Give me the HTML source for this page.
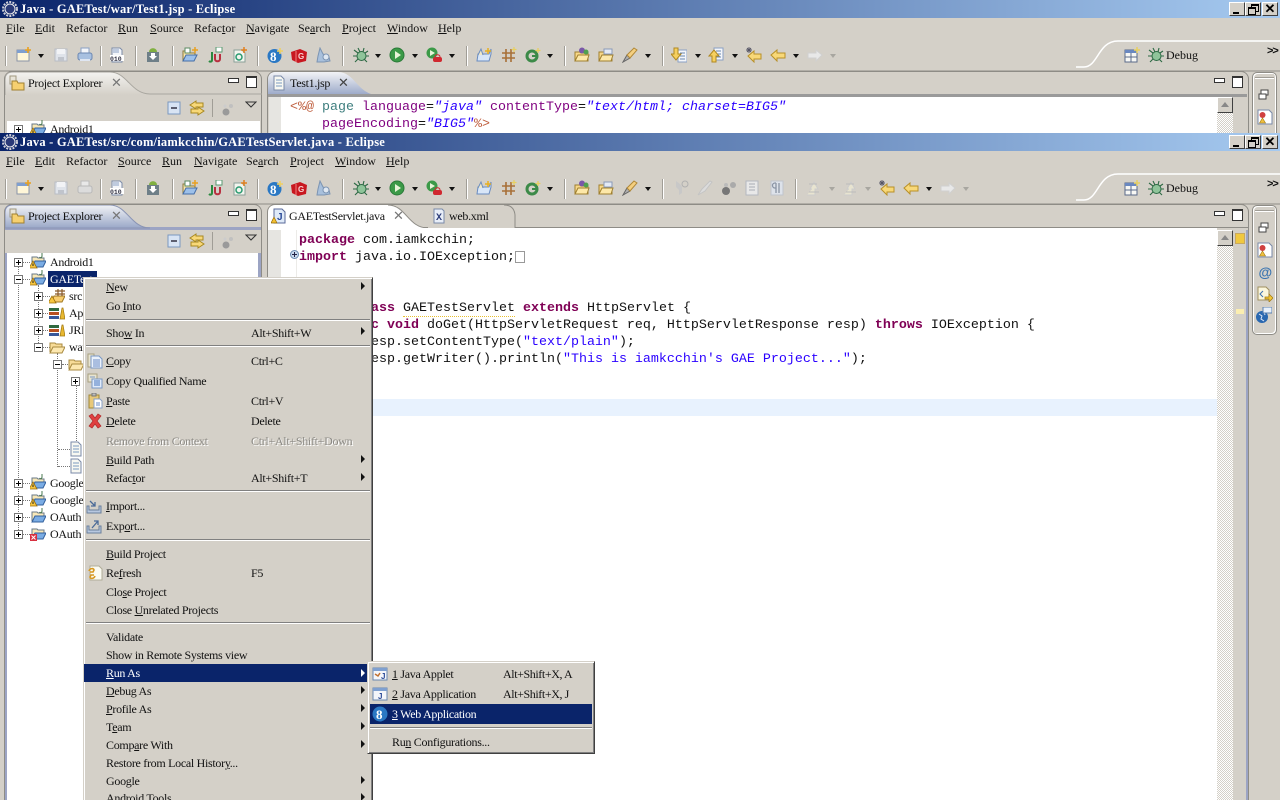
<!DOCTYPE html>
<html><head><meta charset="utf-8"><title>Eclipse</title>
<style>
html,body{margin:0;padding:0;width:1280px;height:800px;overflow:hidden;background:#d4d0c8}
#r{position:relative;width:1280px;height:800px;overflow:hidden;background:#d4d0c8}
.w{position:absolute;left:0;width:1280px;background:#d4d0c8;overflow:hidden}
.t{position:absolute;white-space:nowrap;font:12px/14px "Liberation Serif","Noto Serif CJK SC",serif;color:#111;letter-spacing:-.3px}
.mb{letter-spacing:0}
.b{position:absolute;left:0;width:1280px;height:18px;background:linear-gradient(90deg,#0a246a,#a6caf0)}
.tt{position:absolute;left:20px;top:1px;font:bold 12.5px/16px "Liberation Serif",serif;color:#fff;white-space:nowrap;letter-spacing:.2px}
.wb{position:absolute;top:2px;width:16px;height:14px;background:#d4d0c8;box-sizing:border-box;border:1px solid;border-color:#fff #404040 #404040 #fff}
svg.i{position:absolute;width:16px;height:16px;overflow:visible}
svg.e{position:absolute;width:9px;height:9px}
.sp{position:absolute;top:46px;width:1px;height:20px;background:#a09d96;border-right:1px solid #fff}
.dd{position:absolute;width:0;height:0;border:3px solid transparent;border-top:4px solid #111;border-bottom:0;top:54px}
.dg{border-top-color:#a8a6a0}
.c{position:absolute;white-space:pre;font:13.33px/17px "Liberation Mono",monospace;color:#111}
.k{color:#7f0055;font-weight:bold}.s{color:#2a00ff}
.l{position:absolute;border-left:1px dotted #777}
.h{position:absolute;border-top:1px dotted #777;height:0}
.m{position:absolute;background:#d4d0c8;box-sizing:border-box;border:1px solid;border-color:#d4d0c8 #404040 #404040 #d4d0c8;box-shadow:inset 1px 1px 0 #fff,inset -1px -1px 0 #808080}
.sep{position:absolute;height:1px;background:#808080;border-bottom:1px solid #fff}
.a{position:absolute;width:0;height:0;border:4px solid transparent;border-left:4px solid #111;border-right:0}
.hl{position:absolute;background:#0a246a}
.w2{color:#fff}.g{color:#8c8a85;text-shadow:1px 1px 0 #fff}
u{text-underline-offset:1px}
.hatch{position:absolute;background:repeating-conic-gradient(#d4d0c8 0 25%,#fff 0 50%) 0 0/2px 2px}
.x{position:absolute;top:76px;color:#777;font:13px/14px "Liberation Sans",sans-serif}
.ch{position:absolute;left:1267px;top:44px;font:bold 11px/14px "Liberation Sans",sans-serif;letter-spacing:-1px;color:#111}
</style></head><body><div id="r">
<svg width="0" height="0" style="position:absolute"><defs>
<symbol id="logo" viewBox="0 0 16 16"><circle cx="8" cy="8" r="7" fill="none" stroke="#cfcfd8" stroke-width="2" stroke-dasharray="2 1.2"/><circle cx="8" cy="8" r="5" fill="#2a3a78" stroke="#eee"/></symbol>
<symbol id="new" viewBox="0 0 16 16"><rect x="1" y="3" width="12" height="11" fill="#fff6d8" stroke="#8a94a8"/><rect x="1" y="3" width="12" height="3" fill="#7f9fd0"/><path d="M12 0v6M9 3h6" stroke="#e8a020" stroke-width="1.6"/></symbol>
<symbol id="save" viewBox="0 0 16 16"><path d="M2 2h12v12H2z" fill="#dfe3ea" stroke="#b8bcc4"/><rect x="4" y="2" width="8" height="5" fill="#f2f3f6"/><rect x="5" y="10" width="6" height="4" fill="#c0c4cc"/></symbol>
<symbol id="print" viewBox="0 0 16 16"><rect x="4" y="1" width="8" height="6" fill="#f4f6fa" stroke="#8aa0c4"/><rect x="1" y="6" width="14" height="7" rx="2" fill="#a8c0e0" stroke="#6b87b2"/><rect x="3" y="12" width="10" height="2" fill="#dfe6f2"/></symbol>
<symbol id="printg" viewBox="0 0 16 16"><rect x="4" y="1" width="8" height="6" fill="#e8e8e8" stroke="#bbb"/><rect x="1" y="6" width="14" height="7" rx="2" fill="#dcdcdc" stroke="#b8b8b8"/></symbol>
<symbol id="bin" viewBox="0 0 16 16"><path d="M3 1h8l2 2v12H3z" fill="#f4f6fa" stroke="#7c8ca8"/><rect x="1" y="8" width="14" height="6" fill="#fff"/><path d="M4 3h6M4 5h6" stroke="#8aa0c4"/><text x="1" y="14" font-family="Liberation Mono" font-size="6.5" font-weight="bold" fill="#334">010</text></symbol>
<symbol id="dl" viewBox="0 0 16 16"><rect x="2" y="5" width="12" height="10" fill="#6e7f88"/><path d="M4 5c0-5 8-5 8 0z" fill="#80b040"/><path d="M6 6h4v3h2l-4 4-4-4h2z" fill="#fff"/></symbol>
<symbol id="pkg" viewBox="0 0 16 16"><path d="M1 14V4h5l1 2h6v2" fill="#fde6a8" stroke="#8a7a40"/><path d="M1 14l3-6h11l-3 6z" fill="#9cc0ea" stroke="#446ea8"/><rect x="3" y="1" width="5" height="5" fill="#fff" stroke="#5a8a60"/><path d="M13 0v6M10 3h6" stroke="#e8a020" stroke-width="1.5"/></symbol>
<symbol id="ju" viewBox="0 0 16 16"><path d="M5 5v8c0 2-2 2-3 1" fill="none" stroke="#2a8a40" stroke-width="2"/><path d="M8 7v5c0 3 5 3 5 0V7" fill="none" stroke="#b83040" stroke-width="2"/><rect x="9" y="0" width="6" height="5" fill="#fff" stroke="#5a9a70"/></symbol>
<symbol id="cls" viewBox="0 0 16 16"><path d="M2 3h8l3 3v9H2z" fill="#f2f5ee" stroke="#8aa098"/><circle cx="7" cy="10" r="3" fill="none" stroke="#2a9a70" stroke-width="1.5"/><path d="M12 0v6M9 3h6" stroke="#e08020" stroke-width="1.5"/></symbol>
<symbol id="gg" viewBox="0 0 16 16"><circle cx="7.5" cy="9" r="7" fill="#2a78c4"/><text x="3" y="14" font-family="Liberation Serif" font-size="13" font-weight="bold" fill="#fff">8</text><path d="M13 1v6M10 4h6" stroke="#f0d060" stroke-width="1.5"/></symbol>
<symbol id="gg2" viewBox="0 0 16 16"><circle cx="8" cy="8" r="7.5" fill="#2a78c4"/><text x="4" y="13" font-family="Liberation Serif" font-size="13" font-weight="bold" fill="#fff">8</text></symbol>
<symbol id="red" viewBox="0 0 16 16"><path d="M0 5l9-3 7 3-1 9-8 2-6-3z" fill="#c81820"/><path d="M5 4v11" stroke="#f08080"/><text x="7" y="12" font-family="Liberation Sans" font-size="8" font-weight="bold" fill="#f8d0d0">G</text></symbol>
<symbol id="bird" viewBox="0 0 16 16"><path d="M5 1l3 6 6 3 1 4-6 1H2l1-6z" fill="#a8c0dc" stroke="#7c94b2"/><circle cx="11" cy="10" r="3" fill="#dfe8f2" stroke="#7c94b2"/></symbol>
<symbol id="bug" viewBox="0 0 16 16"><ellipse cx="8.5" cy="9" rx="4.5" ry="4.5" fill="#8fc49a" stroke="#2c6a44"/><path d="M1 3l4 3M15 4l-3 2M0 9h4M13 9h3M2 15l3-3M14 15l-3-3M5 1l2 4M11 1l-1 4" stroke="#2c6a44" stroke-width="1.1"/></symbol>
<symbol id="run" viewBox="0 0 16 16"><circle cx="8" cy="8" r="7" fill="#3c9a48" stroke="#2a7a38"/><path d="M6 4l6 4-6 4z" fill="#e8f4d8"/></symbol>
<symbol id="cov" viewBox="0 0 16 16"><circle cx="6" cy="6" r="5.5" fill="#3c9a48"/><path d="M4 3l5 3-5 3z" fill="#e8f4d8"/><rect x="7" y="10" width="9" height="5" rx="2" fill="#d02830"/><path d="M9 10c0-3 5-3 5 0" fill="none" stroke="#d02830"/></symbol>
<symbol id="tsk" viewBox="0 0 16 16"><path d="M1 14l1-7h11l2-5v5l-2 7z" fill="#d8e6f8" stroke="#6a8cc0"/><path d="M2 8l3-6 2 6" fill="#f0e8c8" stroke="#6a8cc0"/><path d="M12 1v6M9 4h6" stroke="#e8b020" stroke-width="1.5"/></symbol>
<symbol id="grid" viewBox="0 0 16 16"><path d="M5 2v13M10 2v13M1 6h13M1 11h13" stroke="#a87038" stroke-width="1.6"/><path d="M13 0v5M10.5 2.5h5" stroke="#e8d060" stroke-width="1.2"/></symbol>
<symbol id="gc" viewBox="0 0 16 16"><circle cx="7" cy="9" r="5" fill="none" stroke="#3c8a48" stroke-width="3"/><rect x="7" y="8" width="5" height="2" fill="#3c8a48"/><path d="M13 1v5M10.5 3.5h5" stroke="#e8d060" stroke-width="1.3"/></symbol>
<symbol id="f1" viewBox="0 0 16 16"><path d="M1 14V5h5l1 1h7v8z" fill="#f8d888" stroke="#a08030"/><path d="M1 14l3-6h11l-2 6z" fill="#fde8a8" stroke="#a08030"/><circle cx="8" cy="3.5" r="3" fill="#7a58a8"/><circle cx="12" cy="5" r="2.5" fill="#50a050"/></symbol>
<symbol id="f2" viewBox="0 0 16 16"><path d="M1 14V5h5l1 1h7v8z" fill="#f8d888" stroke="#a08030"/><path d="M1 14l3-6h11l-2 6z" fill="#fde8a8" stroke="#a08030"/><rect x="6" y="2" width="8" height="5" fill="#e4eaf4" stroke="#8a9ab8"/></symbol>
<symbol id="pen" viewBox="0 0 16 16"><path d="M1 15l4-7 3 3z" fill="#b0b0b0" stroke="#666"/><path d="M5 8l7-7 3 2-7 8z" fill="#f4cf80" stroke="#b08838"/></symbol>
<symbol id="dn" viewBox="0 0 16 16"><rect x="7" y="3" width="9" height="12" fill="#f4f6fa" stroke="#8aa0c4"/><path d="M9 6h5M9 9h5M9 12h5" stroke="#6a88b0"/><path d="M3 1h4v6h3l-5 6-5-6h3z" fill="#f6d060" stroke="#b08820"/></symbol>
<symbol id="up" viewBox="0 0 16 16"><rect x="6" y="1" width="9" height="12" fill="#f4f6fa" stroke="#8aa0c4"/><path d="M8 4h5M8 7h5M8 10h5" stroke="#6a88b0"/><path d="M4 15h4V9h3L6 3 1 9h3z" fill="#f6d060" stroke="#b08820"/></symbol>
<symbol id="bk" viewBox="0 0 16 16"><path d="M1 8l6-5v3h8v5H7v3z" fill="#f8d878" stroke="#b89028"/></symbol>
<symbol id="bks" viewBox="0 0 16 16"><path d="M2 9l6-5v3h7v5H8v3z" fill="#f8d878" stroke="#b89028"/><path d="M3 0v6M0 3h6M1 1l4 4M5 1L1 5" stroke="#556" stroke-width=".9"/></symbol>
<symbol id="fw" viewBox="0 0 16 16"><path d="M15 8l-6-5v3H1v5h8v3z" fill="#e8e8e8" stroke="#d0d0d0"/></symbol>
<symbol id="g1" viewBox="0 0 16 16"><path d="M7 4l-4-3 0 6 3 3v5l3-2V7z" fill="#c8c8c8"/><circle cx="12" cy="4" r="3" fill="none" stroke="#b0b0b0"/></symbol>
<symbol id="g2" viewBox="0 0 16 16"><path d="M1 15l4-6 8-8 2 1-7 9z" fill="#dcdcdc" stroke="#c4c4c4"/></symbol>
<symbol id="g3" viewBox="0 0 16 16"><circle cx="5" cy="11" r="4" fill="#777"/><circle cx="12" cy="5" r="3" fill="#aaa"/><circle cx="5" cy="5" r="2" fill="#bbb"/></symbol>
<symbol id="g4" viewBox="0 0 16 16"><rect x="2" y="1" width="12" height="14" fill="#e8e8e8" stroke="#b4b8c0"/><path d="M5 4h6M5 7h6M5 10h6" stroke="#a8acb4"/></symbol>
<symbol id="g5" viewBox="0 0 16 16"><rect x="2" y="1" width="12" height="14" fill="#dde2ea" stroke="#c0c4cc"/><path d="M7 3v10M10 3v10M7 3H6a2.500 2.500 0 0 0 0 5h1" fill="none" stroke="#8a94a4" stroke-width="1.3"/></symbol>
<symbol id="g6" viewBox="0 0 16 16"><path d="M2 15h8V9h3L9 2 5 9h2" fill="#e8e4d0" stroke="#ccc"/><path d="M4 4h8M4 12h10" stroke="#bbb"/></symbol>
<symbol id="persp" viewBox="0 0 16 16"><rect x="1" y="3" width="12" height="12" fill="#f8f8f4" stroke="#5a6a8a"/><rect x="1" y="3" width="12" height="3" fill="#6a88c0"/><path d="M7 6v9M1 10h12" stroke="#5a6a8a"/><path d="M13 0v6M10 3h6" stroke="#e8d060" stroke-width="1.5"/></symbol>
<symbol id="pe" viewBox="0 0 16 16"><path d="M1 1h6v8H1z" fill="#e8e4d8" stroke="#a09880"/><path d="M3 6h5l1 2h6v7H3z" fill="#f6d070" stroke="#a08030"/></symbol>
<symbol id="doc" viewBox="0 0 16 16"><path d="M3 1h7l3 3v11H3z" fill="#f8f8f2" stroke="#7a8aa8"/><path d="M5 5h6M5 8h6M5 11h6" stroke="#7a9ac0"/></symbol>
<symbol id="jf" viewBox="0 0 16 16"><path d="M3 1h8l3 3v11H3z" fill="#dfeaf8" stroke="#5a6a9a"/><text x="6" y="12" font-family="Liberation Sans" font-size="10" font-weight="bold" fill="#2a4a98">J</text><path d="M0 15l3-6 3 6z" fill="#f4c030" stroke="#906808" stroke-width=".7"/></symbol>
<symbol id="xf" viewBox="0 0 16 16"><path d="M3 1h8l2 2v12H3z" fill="#e8eef8" stroke="#7a8aa8"/><text x="5" y="12" font-family="Liberation Mono" font-size="10" font-weight="bold" fill="#2a3a78">X</text></symbol>
<symbol id="prj" viewBox="0 0 16 16"><path d="M2 13V4h5l1 1h6v3" fill="#f8e8b8" stroke="#6a7a88"/><path d="M2 14l3-6h11l-3 6z" fill="#7aace4" stroke="#33609c"/><path d="M12 0v3c0 2-2 2-2.500 1" fill="none" stroke="#4a7a50"/><path d="M-1 15l4-7 4 7z" fill="#f6c640" stroke="#9a6c08" stroke-width=".8"/><path d="M3 10.500v2.500" stroke="#222"/></symbol>
<symbol id="prjn" viewBox="0 0 16 16"><path d="M2 13V4h5l1 1h6v3" fill="#f8e8b8" stroke="#6a7a88"/><path d="M2 14l3-6h11l-3 6z" fill="#7aace4" stroke="#33609c"/><path d="M12 0v3c0 2-2 2-2.500 1" fill="none" stroke="#4a7a50"/></symbol>
<symbol id="prje" viewBox="0 0 16 16"><path d="M2 13V4h5l1 1h6v3" fill="#f8e8b8" stroke="#6a7a88"/><path d="M2 14l3-6h11l-3 6z" fill="#7aace4" stroke="#33609c"/><rect x="0" y="9" width="7" height="7" fill="#d83040"/><path d="M1.500 10.500l4 4M5.500 10.500l-4 4" stroke="#fff"/></symbol>
<symbol id="src" viewBox="0 0 16 16"><path d="M2 14l3-6h11l-3 6z" fill="#f8cd70" stroke="#a07820"/><path d="M9 1v7M13 1v7M6 3h10M6 6h10" stroke="#8a5a28" stroke-width="1.2"/><path d="M-1 15l4-7 4 7z" fill="#f6c640" stroke="#9a6c08" stroke-width=".8"/></symbol>
<symbol id="lib" viewBox="0 0 16 16"><rect x="0" y="3" width="10" height="3" fill="#306a40"/><rect x="0" y="7" width="10" height="3" fill="#b85020"/><rect x="0" y="11" width="10" height="3" fill="#38589a"/><path d="M11 14l2-11h1l2 11z" fill="#e8b830" stroke="#a07810" stroke-width=".7"/></symbol>
<symbol id="fold" viewBox="0 0 16 16"><path d="M1 13V4h5l1 1h6v3" fill="#f8dc98" stroke="#a88a40"/><path d="M1 14l3-6h12l-3 6z" fill="#fde8b0" stroke="#a88a40"/></symbol>
<symbol id="plus" viewBox="0 0 9 9"><rect x=".5" y=".5" width="8" height="8" fill="#fff" stroke="#777"/><path d="M2 4.500h5M4.500 2v5" stroke="#000"/></symbol>
<symbol id="minus" viewBox="0 0 9 9"><rect x=".5" y=".5" width="8" height="8" fill="#fff" stroke="#777"/><path d="M2 4.500h5" stroke="#000"/></symbol>
<symbol id="coll" viewBox="0 0 16 16"><rect x="2" y="2" width="12" height="12" fill="#d8e4f4" stroke="#7a98c0"/><path d="M5 8h6" stroke="#334" stroke-width="1.5"/></symbol>
<symbol id="link" viewBox="0 0 16 16"><path d="M1 5l6-4v2h7v4H7v2z" fill="#f8d878" stroke="#a88820"/><path d="M15 11l-6-4v2H2v4h7v2z" fill="#f8d878" stroke="#a88820"/></symbol>
<symbol id="flt" viewBox="0 0 16 16"><circle cx="6" cy="11" r="3.500" fill="#9a9a9a"/><circle cx="11" cy="5" r="2" fill="#c0c0c0"/><circle cx="5" cy="5" r="1.500" fill="#ccc"/></symbol>
<symbol id="rest" viewBox="0 0 16 16"><rect x="5" y="3" width="7" height="5" fill="#fff" stroke="#444"/><rect x="3" y="7" width="7" height="5" fill="#fff" stroke="#444"/></symbol>
<symbol id="dbg" viewBox="0 0 16 16"><path d="M1 1h11l3 3v11H1z" fill="#fff" stroke="#7a8aa8"/><circle cx="5.500" cy="6" r="3" fill="#d04040"/><path d="M5.500 9l3 5h-6z" fill="#f0c040" stroke="#a07810" stroke-width=".6"/></symbol>
<symbol id="at" viewBox="0 0 16 16"><text x="1.500" y="13" font-family="Liberation Sans" font-size="14" font-weight="bold" fill="#3a74b0">@</text></symbol>
<symbol id="dc2" viewBox="0 0 16 16"><path d="M1 1h8l3 3v10H1z" fill="#fbf6dc" stroke="#a09060"/><path d="M6 5L3 8l3 3" fill="none" stroke="#3a70b0"/><path d="M8 11h4V8l4 4-4 4v-3H8z" fill="#f4c838" stroke="#a07810" stroke-width=".7"/></symbol>
<symbol id="gb" viewBox="0 0 16 16"><circle cx="6" cy="10" r="6" fill="#2a68b0"/><path d="M3 7l3 2-1 3 3 2M8 5l1 3" stroke="#dfe8f8" fill="none"/><rect x="7" y="0" width="9" height="6" fill="#e8f0fa" stroke="#5a80b0"/></symbol>
<symbol id="copy" viewBox="0 0 16 16"><rect x="1" y="1" width="6" height="13" fill="#e8e4d0" stroke="#a8a080"/><path d="M4 3h8l3 3v9H4z" fill="#eaf1fb" stroke="#7a98c4"/><path d="M6 7h7M6 9h7M6 11h7M6 13h7" stroke="#6a8cc4"/></symbol>
<symbol id="copy2" viewBox="0 0 16 16"><rect x="1" y="1" width="9" height="8" fill="#e8e4d0" stroke="#a8a080"/><rect x="5" y="6" width="10" height="9" fill="#dfeafa" stroke="#7a98c4"/><path d="M7 8h6M7 10h6M7 12h6" stroke="#4a78c0"/><path d="M3 4h5" stroke="#7a98c4"/></symbol>
<symbol id="paste" viewBox="0 0 16 16"><rect x="1" y="2" width="10" height="13" fill="#e8c878" stroke="#a08838"/><rect x="4" y="0" width="4" height="3" fill="#bbb" stroke="#777"/><path d="M6 6h6l2 2v7H6z" fill="#fff" stroke="#8aa0c4"/><path d="M8 10h4M8 12h4" stroke="#6a8cc4"/></symbol>
<symbol id="del" viewBox="0 0 16 16"><path d="M2 3l3-2 3 4 3-4 3 2-4 5 4 5-3 2-3-4-3 4-3-2 4-5z" fill="#e04040" stroke="#b02828" stroke-width=".7"/></symbol>
<symbol id="imp" viewBox="0 0 16 16"><path d="M1 8v7h14V8h-2v4H3V8z" fill="#b8c8e0" stroke="#6a7f9c"/><path d="M4 3l5 5M9 4v4H5" fill="none" stroke="#4a6a98" stroke-width="1.3"/></symbol>
<symbol id="exp" viewBox="0 0 16 16"><path d="M1 8v7h14V8h-2v4H3V8z" fill="#b8c8e0" stroke="#6a7f9c"/><path d="M6 10l6-7M8 3h4v4" fill="none" stroke="#4a6a98" stroke-width="1.3"/></symbol>
<symbol id="ref" viewBox="0 0 16 16"><path d="M3 1h9l3 3v11H3z" fill="#fbfbf2" stroke="#b0ac98"/><path d="M2 6c1-3 5-3 5-1L6 7H3M8 11c-1 3-5 3-5 1l1-2h3" fill="none" stroke="#d89820" stroke-width="1.6"/></symbol>
<symbol id="app" viewBox="0 0 16 16"><rect x="1" y="2" width="14" height="12" fill="#f4f6fa" stroke="#6a88b0"/><rect x="1" y="2" width="14" height="3" fill="#7fa0d0"/><path d="M3 8l3 2 2-3" stroke="#c07030" fill="none" stroke-width="1.5"/><text x="9" y="13" font-family="Liberation Sans" font-size="8" font-weight="bold" fill="#2a4a98">J</text></symbol>
<symbol id="japp" viewBox="0 0 16 16"><rect x="1" y="2" width="14" height="12" fill="#f4f6fa" stroke="#6a88b0"/><rect x="1" y="2" width="14" height="3" fill="#7fa0d0"/><text x="6" y="13" font-family="Liberation Sans" font-size="8" font-weight="bold" fill="#2a4a98">J</text></symbol>
<linearGradient id="gw" x1="0" y1="0" x2="0" y2="1"><stop offset="0" stop-color="#f4f3f0"/><stop offset="1" stop-color="#d4d0c8"/></linearGradient>
<linearGradient id="gbl" x1="0" y1="0" x2="0" y2="1"><stop offset="0" stop-color="#f2f3f6"/><stop offset="1" stop-color="#9aa8c8"/></linearGradient>
</defs></svg>

<!-- WINDOW 1 -->
<div class="w" style="top:0;height:133px">
<div class="b"></div>
<svg class="i" style="left:2px;top:1px"><use href="#logo"/></svg>
<div class="tt">Java - GAETest/war/Test1.jsp - Eclipse</div>
<div class="wb" style="left:1229px"><div style="position:absolute;left:3px;top:9px;width:6px;height:2px;background:#000"></div></div>
<div class="wb" style="left:1245px"><div style="position:absolute;left:5px;top:1px;width:6px;height:5px;border:1px solid #000;border-top-width:2px"></div><div style="position:absolute;left:2px;top:4px;width:6px;height:5px;border:1px solid #000;border-top-width:2px;background:#d4d0c8"></div></div>
<div class="wb" style="left:1262px;font:bold 13px/12px 'Liberation Sans',sans-serif;text-align:center;color:#000">✕</div>

<div class="t mb" style="left:6px;top:21px"><u>F</u>ile</div><div class="t mb" style="left:35px;top:21px"><u>E</u>dit</div><div class="t mb" style="left:66px;top:21px">Refactor</div><div class="t mb" style="left:118px;top:21px"><u>R</u>un</div><div class="t mb" style="left:150px;top:21px"><u>S</u>ource</div><div class="t mb" style="left:194px;top:21px">Refac<u>t</u>or</div><div class="t mb" style="left:246px;top:21px"><u>N</u>avigate</div><div class="t mb" style="left:298px;top:21px">Se<u>a</u>rch</div><div class="t mb" style="left:342px;top:21px"><u>P</u>roject</div><div class="t mb" style="left:387px;top:21px"><u>W</u>indow</div><div class="t mb" style="left:438px;top:21px"><u>H</u>elp</div>

<div class="sp" style="left:5px"></div>
<svg class="i" style="left:16px;top:47px"><use href="#new"/></svg><div class="dd" style="left:38px"></div>
<svg class="i" style="left:53px;top:47px"><use href="#save"/></svg>
<svg class="i" style="left:77px;top:47px"><use href="#print"/></svg>
<div class="sp" style="left:100px"></div>
<svg class="i" style="left:109px;top:47px"><use href="#bin"/></svg>
<div class="sp" style="left:135px"></div>
<svg class="i" style="left:145px;top:47px"><use href="#dl"/></svg>
<div class="sp" style="left:172px"></div>
<svg class="i" style="left:182px;top:47px"><use href="#pkg"/></svg>
<svg class="i" style="left:207px;top:47px"><use href="#ju"/></svg>
<svg class="i" style="left:232px;top:47px"><use href="#cls"/></svg>
<div class="sp" style="left:257px"></div>
<svg class="i" style="left:267px;top:47px"><use href="#gg"/></svg>
<svg class="i" style="left:291px;top:47px"><use href="#red"/></svg>
<svg class="i" style="left:315px;top:47px"><use href="#bird"/></svg>
<div class="sp" style="left:342px"></div>
<svg class="i" style="left:353px;top:47px"><use href="#bug"/></svg><div class="dd" style="left:375px"></div>
<svg class="i" style="left:389px;top:47px"><use href="#run"/></svg><div class="dd" style="left:412px"></div>
<svg class="i" style="left:426px;top:47px"><use href="#cov"/></svg><div class="dd" style="left:449px"></div>
<div class="sp" style="left:466px"></div>
<svg class="i" style="left:476px;top:47px"><use href="#tsk"/></svg>
<svg class="i" style="left:501px;top:47px"><use href="#grid"/></svg>
<svg class="i" style="left:525px;top:47px"><use href="#gc"/></svg><div class="dd" style="left:547px"></div>
<div class="sp" style="left:564px"></div>
<svg class="i" style="left:574px;top:47px"><use href="#f1"/></svg>
<svg class="i" style="left:598px;top:47px"><use href="#f2"/></svg>
<svg class="i" style="left:622px;top:47px"><use href="#pen"/></svg><div class="dd" style="left:645px"></div>
<div class="sp" style="left:662px"></div>
<svg class="i" style="left:671px;top:47px"><use href="#dn"/></svg><div class="dd" style="left:695px"></div>
<svg class="i" style="left:708px;top:47px"><use href="#up"/></svg><div class="dd" style="left:732px"></div>
<svg class="i" style="left:746px;top:47px"><use href="#bks"/></svg>
<svg class="i" style="left:770px;top:47px"><use href="#bk"/></svg><div class="dd" style="left:793px"></div>
<svg class="i" style="left:807px;top:47px"><use href="#fw"/></svg><div class="dd dg" style="left:830px"></div>

<svg style="position:absolute;left:0;top:36px" width="1280" height="36"><path d="M1076 31H1084C1098 31 1098 5 1118 5H1280" fill="none" stroke="#fff" stroke-width="1.500"/><path d="M0 35H1280" stroke="#8e8c86"/></svg>
<svg class="i" style="left:1124px;top:47px"><use href="#persp"/></svg>
<svg class="i" style="left:1148px;top:47px"><use href="#bug"/></svg>
<div class="t mb" style="left:1166px;top:48px">Debug</div>
<div class="ch">&gt;&gt;</div>

<!-- left pane -->
<div style="position:absolute;left:4px;top:71px;width:258px;height:80px;box-sizing:border-box;border:1px solid #8e8c86;border-radius:8px 8px 0 0"></div>
<svg style="position:absolute;left:5px;top:72px" width="257" height="24"><path d="M0 23V8Q0 0 8 0H105C122 0 126 22 145 22H257" fill="url(#gw)" stroke="#a8a69f"/></svg>
<svg class="i" style="left:9px;top:75px"><use href="#pe"/></svg>
<div class="t" style="left:28px;top:76px">Project Explorer</div>
<div class="x" style="left:111px">✕</div>
<div style="position:absolute;left:228px;top:78px;width:9px;height:3px;background:#fff;border:1px solid #333"></div>
<div style="position:absolute;left:246px;top:76px;width:9px;height:9px;background:#fff;border:1px solid #333;border-top-width:2px"></div>
<svg class="i" style="left:166px;top:100px"><use href="#coll"/></svg><svg class="i" style="left:189px;top:100px"><use href="#link"/></svg>
<div style="position:absolute;left:212px;top:99px;width:1px;height:18px;background:#a09d96"></div>
<svg class="i" style="left:220px;top:101px"><use href="#flt"/></svg>
<svg style="position:absolute;left:245px;top:101px" width="12" height="8"><path d="M1 1h10L6 6z" fill="#d4d0c8" stroke="#333"/></svg>
<div style="position:absolute;left:7px;top:121px;width:253px;height:12px;background:#fff"></div>
<svg class="e" style="left:14px;top:125px"><use href="#plus"/></svg>
<svg class="i" style="left:30px;top:120px"><use href="#prj"/></svg>
<div class="t" style="left:50px;top:122px">Android1</div>

<!-- editor pane -->
<div style="position:absolute;left:267px;top:71px;width:982px;height:80px;box-sizing:border-box;border:1px solid #8e8c86;border-radius:8px 8px 0 0"></div>
<svg style="position:absolute;left:268px;top:72px" width="150" height="24"><path d="M0 23V8Q0 0 8 0H70C87 0 90 23 110 23H0z" fill="url(#gbl)"/></svg>
<div style="position:absolute;left:268px;top:94px;width:979px;height:3px;background:#9a9a9a"></div>
<svg class="i" style="left:271px;top:75px"><use href="#doc"/></svg>
<div class="t" style="left:290px;top:76px">Test1.jsp</div>
<div class="x" style="left:338px;color:#444">✕</div>
<div style="position:absolute;left:1214px;top:78px;width:9px;height:3px;background:#fff;border:1px solid #333"></div>
<div style="position:absolute;left:1232px;top:76px;width:9px;height:9px;background:#fff;border:1px solid #333;border-top-width:2px"></div>
<div style="position:absolute;left:269px;top:97px;width:12px;height:36px;background:#e6e5e1"></div>
<div style="position:absolute;left:281px;top:97px;width:936px;height:36px;background:#fff"></div>
<div class="c" style="left:290px;top:99px"><span style="color:#bf5f3f">&lt;%@</span> <span style="color:#3f7f7f">page</span> <span style="color:#7f007f">language</span>=<span class="s" style="font-style:italic">"java"</span> <span style="color:#7f007f">contentType</span>=<span class="s" style="font-style:italic">"text/html; charset=BIG5"</span></div>
<div class="c" style="left:322px;top:116px"><span style="color:#7f007f">pageEncoding</span>=<span class="s" style="font-style:italic">"BIG5"</span><span style="color:#bf5f3f">%&gt;</span></div>
<div class="hatch" style="left:1217px;top:113px;width:16px;height:20px"></div>
<div style="position:absolute;left:1217px;top:97px;width:16px;height:16px;box-sizing:border-box;background:#d4d0c8;border:1px solid;border-color:#fff #404040 #404040 #fff"><div style="position:absolute;left:3px;top:4px;border:4px solid transparent;border-bottom:5px solid #888;border-top:0"></div></div>
<div style="position:absolute;left:1252px;top:72px;width:25px;height:80px;box-sizing:border-box;border:1px solid #8e8c86;border-radius:5px;box-shadow:inset 1px 1px 0 #fff,inset -1px 0 0 #fff"></div>
<div style="position:absolute;left:1255px;top:77px;width:19px;height:1px;background:#a09d96;border-bottom:1px solid #fff"></div>
<svg class="i" style="left:1256px;top:87px"><use href="#rest"/></svg>
<svg class="i" style="left:1257px;top:109px"><use href="#dbg"/></svg>
</div>

<!-- WINDOW 2 -->
<div class="w" style="top:133px;height:667px">
<div class="b"></div>
<svg class="i" style="left:2px;top:1px"><use href="#logo"/></svg>
<div class="tt">Java - GAETest/src/com/iamkcchin/GAETestServlet.java - Eclipse</div>
<div class="wb" style="left:1229px"><div style="position:absolute;left:3px;top:9px;width:6px;height:2px;background:#000"></div></div>
<div class="wb" style="left:1245px"><div style="position:absolute;left:5px;top:1px;width:6px;height:5px;border:1px solid #000;border-top-width:2px"></div><div style="position:absolute;left:2px;top:4px;width:6px;height:5px;border:1px solid #000;border-top-width:2px;background:#d4d0c8"></div></div>
<div class="wb" style="left:1262px;font:bold 13px/12px 'Liberation Sans',sans-serif;text-align:center;color:#000">✕</div>

<div class="t mb" style="left:6px;top:21px"><u>F</u>ile</div><div class="t mb" style="left:35px;top:21px"><u>E</u>dit</div><div class="t mb" style="left:66px;top:21px">Refactor</div><div class="t mb" style="left:118px;top:21px"><u>S</u>ource</div><div class="t mb" style="left:162px;top:21px"><u>R</u>un</div><div class="t mb" style="left:194px;top:21px"><u>N</u>avigate</div><div class="t mb" style="left:246px;top:21px">Se<u>a</u>rch</div><div class="t mb" style="left:290px;top:21px"><u>P</u>roject</div><div class="t mb" style="left:335px;top:21px"><u>W</u>indow</div><div class="t mb" style="left:386px;top:21px"><u>H</u>elp</div>

<div class="sp" style="left:5px"></div>
<svg class="i" style="left:16px;top:47px"><use href="#new"/></svg><div class="dd" style="left:38px"></div>
<svg class="i" style="left:53px;top:47px"><use href="#save"/></svg>
<svg class="i" style="left:77px;top:47px"><use href="#printg"/></svg>
<div class="sp" style="left:100px"></div>
<svg class="i" style="left:109px;top:47px"><use href="#bin"/></svg>
<div class="sp" style="left:135px"></div>
<svg class="i" style="left:145px;top:47px"><use href="#dl"/></svg>
<div class="sp" style="left:172px"></div>
<svg class="i" style="left:182px;top:47px"><use href="#pkg"/></svg>
<svg class="i" style="left:207px;top:47px"><use href="#ju"/></svg>
<svg class="i" style="left:232px;top:47px"><use href="#cls"/></svg>
<div class="sp" style="left:257px"></div>
<svg class="i" style="left:267px;top:47px"><use href="#gg"/></svg>
<svg class="i" style="left:291px;top:47px"><use href="#red"/></svg>
<svg class="i" style="left:315px;top:47px"><use href="#bird"/></svg>
<div class="sp" style="left:342px"></div>
<svg class="i" style="left:353px;top:47px"><use href="#bug"/></svg><div class="dd" style="left:375px"></div>
<svg class="i" style="left:389px;top:47px"><use href="#run"/></svg><div class="dd" style="left:412px"></div>
<svg class="i" style="left:426px;top:47px"><use href="#cov"/></svg><div class="dd" style="left:449px"></div>
<div class="sp" style="left:466px"></div>
<svg class="i" style="left:476px;top:47px"><use href="#tsk"/></svg>
<svg class="i" style="left:501px;top:47px"><use href="#grid"/></svg>
<svg class="i" style="left:525px;top:47px"><use href="#gc"/></svg><div class="dd" style="left:547px"></div>
<div class="sp" style="left:564px"></div>
<svg class="i" style="left:574px;top:47px"><use href="#f1"/></svg>
<svg class="i" style="left:598px;top:47px"><use href="#f2"/></svg>
<svg class="i" style="left:622px;top:47px"><use href="#pen"/></svg><div class="dd" style="left:645px"></div>
<div class="sp" style="left:662px"></div>
<svg class="i" style="left:673px;top:47px"><use href="#g1"/></svg>
<svg class="i" style="left:697px;top:47px"><use href="#g2"/></svg>
<svg class="i" style="left:721px;top:47px"><use href="#g3"/></svg>
<svg class="i" style="left:744px;top:47px"><use href="#g4"/></svg>
<svg class="i" style="left:769px;top:47px"><use href="#g5"/></svg>
<div class="sp" style="left:795px"></div>
<svg class="i" style="left:805px;top:47px"><use href="#g6"/></svg><div class="dd dg" style="left:829px"></div>
<svg class="i" style="left:842px;top:47px"><use href="#g6"/></svg><div class="dd dg" style="left:865px"></div>
<svg class="i" style="left:879px;top:47px"><use href="#bks"/></svg>
<svg class="i" style="left:903px;top:47px"><use href="#bk"/></svg><div class="dd" style="left:926px"></div>
<svg class="i" style="left:940px;top:47px"><use href="#fw"/></svg><div class="dd dg" style="left:963px"></div>

<svg style="position:absolute;left:0;top:36px" width="1280" height="36"><path d="M1076 31H1084C1098 31 1098 5 1118 5H1280" fill="none" stroke="#fff" stroke-width="1.500"/><path d="M0 35H1280" stroke="#8e8c86"/></svg>
<svg class="i" style="left:1124px;top:47px"><use href="#persp"/></svg>
<svg class="i" style="left:1148px;top:47px"><use href="#bug"/></svg>
<div class="t mb" style="left:1166px;top:48px">Debug</div>
<div class="ch">&gt;&gt;</div>

<!-- left pane -->
<div style="position:absolute;left:4px;top:71px;width:258px;height:600px;box-sizing:border-box;border:1px solid #8e8c86;border-radius:8px 8px 0 0"></div>
<div style="position:absolute;left:5px;top:94px;width:256px;height:3px;background:#9ca4c4"></div>
<svg style="position:absolute;left:5px;top:72px" width="257" height="24"><path d="M0 23V8Q0 0 8 0H105C122 0 126 23 145 23z" fill="url(#gbl)" stroke="#8a94b4"/></svg>
<svg class="i" style="left:9px;top:75px"><use href="#pe"/></svg>
<div class="t" style="left:28px;top:76px">Project Explorer</div>
<div class="x" style="left:111px">✕</div>
<div style="position:absolute;left:228px;top:78px;width:9px;height:3px;background:#fff;border:1px solid #333"></div>
<div style="position:absolute;left:246px;top:76px;width:9px;height:9px;background:#fff;border:1px solid #333;border-top-width:2px"></div>
<svg class="i" style="left:166px;top:100px"><use href="#coll"/></svg><svg class="i" style="left:189px;top:100px"><use href="#link"/></svg>
<div style="position:absolute;left:212px;top:99px;width:1px;height:18px;background:#a09d96"></div>
<svg class="i" style="left:220px;top:101px"><use href="#flt"/></svg>
<svg style="position:absolute;left:245px;top:101px" width="12" height="8"><path d="M1 1h10L6 6z" fill="#d4d0c8" stroke="#333"/></svg>
<div style="position:absolute;left:5px;top:120px;width:256px;height:547px;background:#fff;box-sizing:border-box;border-left:2px solid #9ca4c4;border-right:3px solid #9ca4c4"></div>

<!-- tree -->
<div class="l" style="left:18px;top:133px;height:268px"></div>
<div class="h" style="left:22px;top:129px;width:8px"></div><div class="h" style="left:22px;top:146px;width:8px"></div><div class="h" style="left:22px;top:350px;width:8px"></div><div class="h" style="left:22px;top:367px;width:8px"></div><div class="h" style="left:22px;top:384px;width:8px"></div><div class="h" style="left:22px;top:401px;width:8px"></div>
<div class="l" style="left:38px;top:152px;height:62px"></div>
<div class="h" style="left:42px;top:163px;width:8px"></div><div class="h" style="left:42px;top:180px;width:8px"></div><div class="h" style="left:42px;top:197px;width:8px"></div><div class="h" style="left:42px;top:214px;width:8px"></div>
<div class="l" style="left:57px;top:220px;height:114px"></div>
<div class="l" style="left:76px;top:253px;height:55px"></div>
<div class="h" style="left:62px;top:231px;width:6px"></div><div class="h" style="left:58px;top:316px;width:12px"></div><div class="h" style="left:58px;top:333px;width:12px"></div>

<svg class="e" style="left:14px;top:125px"><use href="#plus"/></svg><svg class="i" style="left:30px;top:120px"><use href="#prj"/></svg><div class="t" style="left:50px;top:122px">Android1</div>
<svg class="e" style="left:14px;top:142px"><use href="#minus"/></svg><svg class="i" style="left:30px;top:137px"><use href="#prj"/></svg>
<div class="hl" style="left:48px;top:138px;width:49px;height:16px"></div><div class="t w2" style="left:50px;top:139px">GAETest</div>
<svg class="e" style="left:34px;top:159px"><use href="#plus"/></svg><svg class="i" style="left:49px;top:155px"><use href="#src"/></svg><div class="t" style="left:69px;top:156px">src</div>
<svg class="e" style="left:34px;top:176px"><use href="#plus"/></svg><svg class="i" style="left:49px;top:172px"><use href="#lib"/></svg><div class="t" style="left:69px;top:173px">App</div>
<svg class="e" style="left:34px;top:193px"><use href="#plus"/></svg><svg class="i" style="left:49px;top:189px"><use href="#lib"/></svg><div class="t" style="left:69px;top:190px">JRE</div>
<svg class="e" style="left:34px;top:210px"><use href="#minus"/></svg><svg class="i" style="left:49px;top:206px"><use href="#fold"/></svg><div class="t" style="left:69px;top:207px">war</div>
<svg class="e" style="left:53px;top:227px"><use href="#minus"/></svg><svg class="i" style="left:68px;top:223px"><use href="#fold"/></svg>
<svg class="e" style="left:71px;top:244px"><use href="#plus"/></svg>
<svg class="i" style="left:68px;top:308px"><use href="#doc"/></svg><svg class="i" style="left:68px;top:325px"><use href="#doc"/></svg>
<svg class="e" style="left:14px;top:346px"><use href="#plus"/></svg><svg class="i" style="left:30px;top:341px"><use href="#prj"/></svg><div class="t" style="left:50px;top:343px">Google</div>
<svg class="e" style="left:14px;top:363px"><use href="#plus"/></svg><svg class="i" style="left:30px;top:358px"><use href="#prj"/></svg><div class="t" style="left:50px;top:360px">Google</div>
<svg class="e" style="left:14px;top:380px"><use href="#plus"/></svg><svg class="i" style="left:30px;top:375px"><use href="#prjn"/></svg><div class="t" style="left:50px;top:377px">OAuth</div>
<svg class="e" style="left:14px;top:397px"><use href="#plus"/></svg><svg class="i" style="left:30px;top:392px"><use href="#prje"/></svg><div class="t" style="left:50px;top:394px">OAuth</div>

<!-- editor pane -->
<div style="position:absolute;left:267px;top:71px;width:982px;height:600px;box-sizing:border-box;border:1px solid #8e8c86;border-radius:8px 8px 0 0"></div>
<div style="position:absolute;left:268px;top:94px;width:980px;height:1px;background:#8e8c86"></div>
<svg style="position:absolute;left:268px;top:72px" width="260" height="26"><path d="M160 23V10Q160 0 170 0H236Q246 0 247 10V23z" fill="#d4d0c8"/><path d="M236 0Q246 0 247 10V23" fill="none" stroke="#8e8c86"/><path d="M0 25V8Q0 0 8 0H120C138 0 140 23 160 23V25z" fill="#fff"/><path d="M120 0C138 0 140 23 160 23" fill="none" stroke="#8e8c86"/></svg>
<svg class="i" style="left:271px;top:75px"><use href="#jf"/></svg>
<div class="t" style="left:289px;top:76px">GAETestServlet.java</div>
<div class="x" style="left:393px">✕</div>
<svg class="i" style="left:431px;top:75px"><use href="#xf"/></svg>
<div class="t" style="left:449px;top:76px">web.xml</div>
<div style="position:absolute;left:1214px;top:78px;width:9px;height:3px;background:#fff;border:1px solid #333"></div>
<div style="position:absolute;left:1232px;top:76px;width:9px;height:9px;background:#fff;border:1px solid #333;border-top-width:2px"></div>
<div style="position:absolute;left:268px;top:97px;width:13px;height:570px;background:#e6e5e1"></div>
<div style="position:absolute;left:268px;top:95px;width:949px;height:2px;background:#fff"></div>
<div style="position:absolute;left:281px;top:97px;width:936px;height:570px;background:#fff"></div>
<div style="position:absolute;left:296px;top:97px;width:1px;height:570px;background:#ecebe8"></div>
<div style="position:absolute;left:297px;top:266px;width:920px;height:17px;background:#e8f2fe"></div>
<div class="c" style="left:299px;top:99px"><span class="k">package</span> com.iamkcchin;</div>
<div class="c" style="left:299px;top:116px"><span class="k">import</span> java.io.IOException;</div>
<div style="position:absolute;left:515px;top:118px;width:8px;height:10px;border:1px solid #999"></div>
<svg style="position:absolute;left:290px;top:117px" width="9" height="9"><circle cx="4.500" cy="4.500" r="4" fill="#c8d8ec" stroke="#6a8ab0"/><path d="M2 4.500h5M4.500 2v5" stroke="#224"/></svg>
<div class="c" style="left:299px;top:167px"><span class="k">public class</span> <span style="border-bottom:1px dotted #e8c030">GAETestServlet</span> <span class="k">extends</span> HttpServlet {</div>
<div class="c" style="left:299px;top:184px">    <span class="k">public void</span> doGet(HttpServletRequest req, HttpServletResponse resp) <span class="k">throws</span> IOException {</div>
<div class="c" style="left:299px;top:201px">        resp.setContentType(<span class="s">"text/plain"</span>);</div>
<div class="c" style="left:299px;top:218px">        resp.getWriter().println(<span class="s">"This is iamkcchin's GAE Project..."</span>);</div>
<div class="hatch" style="left:1217px;top:113px;width:16px;height:554px"></div>
<div style="position:absolute;left:1217px;top:97px;width:16px;height:16px;box-sizing:border-box;background:#d4d0c8;border:1px solid;border-color:#fff #404040 #404040 #fff"><div style="position:absolute;left:3px;top:4px;border:4px solid transparent;border-bottom:5px solid #888;border-top:0"></div></div>
<div style="position:absolute;left:1235px;top:100px;width:8px;height:9px;background:#f0c840;border:1px solid #c8a860"></div>
<div style="position:absolute;left:1236px;top:176px;width:8px;height:5px;background:#fbeeb0"></div>
<div style="position:absolute;left:1246px;top:97px;width:2px;height:570px;background:#9ca4c4"></div>
<div style="position:absolute;left:1252px;top:72px;width:25px;height:130px;box-sizing:border-box;border:1px solid #8e8c86;border-radius:5px;box-shadow:inset 1px 1px 0 #fff,inset -1px -1px 0 #fff"></div>
<div style="position:absolute;left:1255px;top:77px;width:19px;height:1px;background:#a09d96;border-bottom:1px solid #fff"></div>
<svg class="i" style="left:1256px;top:87px"><use href="#rest"/></svg>
<svg class="i" style="left:1257px;top:109px"><use href="#dbg"/></svg>
<svg class="i" style="left:1257px;top:131px"><use href="#at"/></svg>
<svg class="i" style="left:1257px;top:153px"><use href="#dc2"/></svg>
<svg class="i" style="left:1256px;top:174px"><use href="#gb"/></svg>
</div>

<!-- CONTEXT MENU -->
<div class="m" style="left:83px;top:277px;width:290px;height:540px"></div>
<div class="sep" style="left:86px;top:319px;width:284px"></div>
<div class="sep" style="left:86px;top:345px;width:284px"></div>
<div class="sep" style="left:86px;top:490px;width:284px"></div>
<div class="sep" style="left:86px;top:539px;width:284px"></div>
<div class="sep" style="left:86px;top:622px;width:284px"></div>
<div class="hl" style="left:84px;top:664px;width:286px;height:18px"></div>

<div class="t" style="left:106px;top:280px"><u>N</u>ew</div><div class="a" style="left:361px;top:282px"></div>
<div class="t" style="left:106px;top:299px">Go <u>I</u>nto</div>
<div class="t" style="left:106px;top:326px">Sho<u>w</u> In</div><div class="t" style="left:251px;top:326px">Alt+Shift+W</div><div class="a" style="left:361px;top:327px"></div>
<div class="t" style="left:106px;top:354px"><u>C</u>opy</div><div class="t" style="left:251px;top:354px">Ctrl+C</div>
<div class="t" style="left:106px;top:374px">Copy Qualified Name</div>
<div class="t" style="left:106px;top:394px"><u>P</u>aste</div><div class="t" style="left:251px;top:394px">Ctrl+V</div>
<div class="t" style="left:106px;top:414px"><u>D</u>elete</div><div class="t" style="left:251px;top:414px">Delete</div>
<div class="t g" style="left:106px;top:434px">Remove from Context</div><div class="t g" style="left:251px;top:434px">Ctrl+Alt+Shift+Down</div>
<div class="t" style="left:106px;top:453px"><u>B</u>uild Path</div><div class="a" style="left:361px;top:455px"></div>
<div class="t" style="left:106px;top:471px">Refac<u>t</u>or</div><div class="t" style="left:251px;top:471px">Alt+Shift+T</div><div class="a" style="left:361px;top:473px"></div>
<div class="t" style="left:106px;top:499px"><u>I</u>mport...</div>
<div class="t" style="left:106px;top:519px">Exp<u>o</u>rt...</div>
<div class="t" style="left:106px;top:547px"><u>B</u>uild Project</div>
<div class="t" style="left:106px;top:566px">Re<u>f</u>resh</div><div class="t" style="left:251px;top:566px">F5</div>
<div class="t" style="left:106px;top:585px">Clo<u>s</u>e Project</div>
<div class="t" style="left:106px;top:603px">Close <u>U</u>nrelated Projects</div>
<div class="t" style="left:106px;top:630px">Validate</div>
<div class="t" style="left:106px;top:648px">Show in Remote Systems view</div>
<div class="t w2" style="left:106px;top:666px"><u>R</u>un As</div><div class="a" style="left:361px;top:669px;border-left-color:#fff"></div>
<div class="t" style="left:106px;top:684px"><u>D</u>ebug As</div><div class="a" style="left:361px;top:686px"></div>
<div class="t" style="left:106px;top:702px"><u>P</u>rofile As</div><div class="a" style="left:361px;top:704px"></div>
<div class="t" style="left:106px;top:720px">T<u>e</u>am</div><div class="a" style="left:361px;top:722px"></div>
<div class="t" style="left:106px;top:738px">Comp<u>a</u>re With</div><div class="a" style="left:361px;top:740px"></div>
<div class="t" style="left:106px;top:756px">Restore from Local Histor<u>y</u>...</div>
<div class="t" style="left:106px;top:774px">Google</div><div class="a" style="left:361px;top:776px"></div>
<div class="t" style="left:106px;top:791px">Android Tools</div><div class="a" style="left:361px;top:793px"></div>

<svg class="i" style="left:87px;top:353px"><use href="#copy"/></svg>
<svg class="i" style="left:87px;top:373px"><use href="#copy2"/></svg>
<svg class="i" style="left:88px;top:393px"><use href="#paste"/></svg>
<svg class="i" style="left:87px;top:413px"><use href="#del"/></svg>
<svg class="i" style="left:86px;top:498px"><use href="#imp"/></svg>
<svg class="i" style="left:86px;top:518px"><use href="#exp"/></svg>
<svg class="i" style="left:87px;top:565px"><use href="#ref"/></svg>

<!-- SUBMENU -->
<div class="m" style="left:367px;top:661px;width:228px;height:93px"></div>
<div class="hl" style="left:370px;top:704px;width:222px;height:20px"></div>
<div class="sep" style="left:370px;top:727px;width:222px"></div>
<svg class="i" style="left:372px;top:666px"><use href="#app"/></svg>
<svg class="i" style="left:372px;top:686px"><use href="#japp"/></svg>
<svg class="i" style="left:372px;top:706px"><use href="#gg2"/></svg>
<div class="t" style="left:392px;top:667px"><u>1</u> Java Applet</div><div class="t" style="left:503px;top:667px;letter-spacing:-.4px">Alt+Shift+X, A</div>
<div class="t" style="left:392px;top:687px"><u>2</u> Java Application</div><div class="t" style="left:503px;top:687px;letter-spacing:-.4px">Alt+Shift+X, J</div>
<div class="t w2" style="left:392px;top:707px"><u>3</u> Web Application</div>
<div class="t" style="left:392px;top:735px">Ru<u>n</u> Configurations...</div>
</div></body></html>
